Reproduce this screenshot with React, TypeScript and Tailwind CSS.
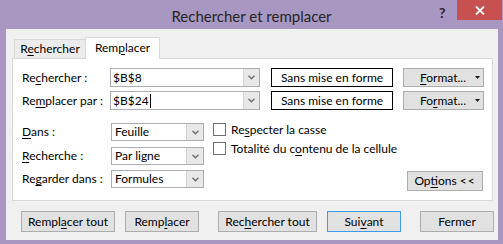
import React from "react";

const font = "font-['Segoe_UI','Lato',sans-serif]";

function Chevron() {
  return (
    <svg width="7" height="5" viewBox="0 0 7 5">
      <path d="M0.5 0.8 L3.5 3.8 L6.5 0.8" fill="none" stroke="#6b6b6b" strokeWidth="1.3" />
    </svg>
  );
}

function Caret() {
  return (
    <svg width="5" height="3" viewBox="0 0 5 3">
      <path d="M0 0 H5 L2.5 3 Z" fill="#1a1a1a" />
    </svg>
  );
}

function Combo({ value, caret = false }: { value: string; caret?: boolean }) {
  return (
    <div className="flex h-[19px] w-[150px] shrink-0 border border-[#abadb3] bg-white">
      <div className="flex flex-1 items-center pl-[2px] text-[12px] text-black">
        {value}
        {caret && <span className="ml-px h-[14px] w-px bg-black" />}
      </div>
      <div className="flex w-[16px] items-center justify-center border-l border-[#d5d5d5] bg-[#e8e8e8]">
        <Chevron />
      </div>
    </div>
  );
}

function Select({ value }: { value: string }) {
  return (
    <div className="flex h-[18px] w-[93px] shrink-0 border border-[#abadb3] bg-white">
      <div className="flex flex-1 items-center pl-[3px] text-[12px] text-black">{value}</div>
      <div className="flex w-[17px] items-center justify-center border-l border-[#d5d5d5] bg-[#e8e8e8]">
        <Chevron />
      </div>
    </div>
  );
}

function FormatButton({ children }: { children: React.ReactNode }) {
  return (
    <div className="ml-[10px] flex h-[19px] w-[81px] shrink-0 items-center border border-[#adadad] bg-[#e1e1e1] pl-[16px] text-[12px] text-black">
      <span className="whitespace-nowrap">{children}</span>
      <span className="mr-[2px] ml-auto flex w-[6px] items-center">
        <Caret />
      </span>
    </div>
  );
}

function Button({ children, w, blue = false }: { children: React.ReactNode; w: string; blue?: boolean }) {
  return (
    <div
      className={
        "flex h-[21px] items-center justify-center border bg-[#e1e1e1] text-[12px] whitespace-nowrap text-black " +
        w +
        (blue ? " border-[#3c9af0]" : " border-[#adadad]")
      }
    >
      {children}
    </div>
  );
}

function U({ children }: { children: React.ReactNode }) {
  return <span className="underline underline-offset-[2px]">{children}</span>;
}

export default function App() {
  return (
    <div className={"flex h-[244px] w-[503px] flex-col bg-[#a797c1] " + font}>
      {/* Title bar */}
      <div className="relative h-[29px]">
        <div className="pt-[5px] text-center text-[15px] text-[#262626]">Rechercher et remplacer</div>
        <div className="absolute top-[2px] left-[439px] text-[14px] font-bold text-[#2a1f2e]">?</div>
        <div className="absolute top-0 left-[457px] flex h-[20px] w-[45px] items-center justify-center bg-[#c75050]">
          <svg width="10" height="9" viewBox="0 0 10 9">
            <path d="M1 0.5 L9 8.5 M9 0.5 L1 8.5" stroke="#ffffff" strokeWidth="1.8" />
          </svg>
        </div>
      </div>

      {/* Client area */}
      <div className="ml-[6px] mr-[5px] h-[211px] bg-[#f0f0f0] pt-[8px]">
        {/* Tabs */}
        <div className="relative z-10 ml-[8px] flex h-[21px] items-end">
          <div className="flex h-[19px] w-[72px] items-center justify-center border border-b-0 border-[#d9d9d9] bg-[#ebebeb] text-[12px] text-black">
            <span>
              R<U>e</U>chercher
            </span>
          </div>
          <div className="-mb-px -ml-px flex h-[22px] w-[75px] items-center justify-center border border-b-0 border-[#d9d9d9] bg-white pb-[2px] text-[12px] text-black">
            <span>
              Rem<U>p</U>lacer
            </span>
          </div>
        </div>

        {/* Panel */}
        <div className="ml-[6px] h-[143px] w-[481px] border border-[#d9d9d9] bg-white pt-[9px] pl-[9px] text-[12px] text-black">
          <div className="flex h-[19px] items-center">
            <div className="w-[88px] shrink-0 whitespace-nowrap">
              Re<U>c</U>hercher :
            </div>
            <Combo value="$B$8" />
            <div className="ml-[11px] flex h-[19px] w-[122px] shrink-0 items-center justify-center border border-black whitespace-nowrap">
              Sans mise en forme
            </div>
            <FormatButton>
              <U>F</U>ormat...
            </FormatButton>
          </div>
          <div className="mt-[4px] flex h-[19px] items-center">
            <div className="w-[88px] shrink-0 whitespace-nowrap">
              Re<U>m</U>placer par :
            </div>
            <Combo value="$B$24" caret />
            <div className="ml-[11px] flex h-[19px] w-[122px] shrink-0 items-center justify-center border border-black whitespace-nowrap">
              Sans mise en forme
            </div>
            <FormatButton>
              Fo<U>r</U>mat...
            </FormatButton>
          </div>

          <div className="mt-[13px] flex items-start">
            <div className="flex shrink-0 flex-col">
              <div className="flex items-center">
                <div className="w-[89px] whitespace-nowrap">
                  <U>D</U>ans :
                </div>
                <Select value="Feuille" />
              </div>
              <div className="mt-[6px] flex items-center">
                <div className="w-[89px] whitespace-nowrap">
                  <U>R</U>echerche :
                </div>
                <Select value="Par ligne" />
              </div>
              <div className="mt-[5px] flex items-center">
                <div className="w-[89px] whitespace-nowrap">
                  Re<U>g</U>arder dans :
                </div>
                <Select value="Formules" />
              </div>
            </div>

            <div className="ml-[9px] flex shrink-0 flex-col">
              <div className="flex h-[13px] items-center">
                <span className="h-[13px] w-[13px] border border-[#707070] bg-white" />
                <span className="ml-[5px] whitespace-nowrap">
                  Re<U>s</U>pecter la casse
                </span>
              </div>
              <div className="mt-[6px] flex h-[13px] items-center">
                <span className="h-[13px] w-[13px] border border-[#707070] bg-white" />
                <span className="ml-[5px] whitespace-nowrap">
                  Totalité du c<U>o</U>ntenu de la cellule
                </span>
              </div>
            </div>

            <div className="mt-[48px] mr-[9px] ml-auto flex h-[20px] w-[76px] shrink-0 items-center justify-center border border-[#adadad] bg-[#e1e1e1] whitespace-nowrap">
              <span>
                Op<U>t</U>ions <span className="tracking-[1px]">&lt;&lt;</span>
              </span>
            </div>
          </div>
        </div>

        {/* Bottom buttons */}
        <div className="mt-[10px] ml-[15px] flex">
          <Button w="w-[94px]">
            Rempl<U>a</U>cer tout
          </Button>
          <div className="ml-[10px]">
            <Button w="w-[74px]">
              Remp<U>l</U>acer
            </Button>
          </div>
          <div className="ml-[19px]">
            <Button w="w-[99px]">
              Rec<U>h</U>ercher tout
            </Button>
          </div>
          <div className="ml-[10px]">
            <Button w="w-[74px]" blue>
              Sui<U>v</U>ant
            </Button>
          </div>
          <div className="ml-[19px]">
            <Button w="w-[74px]">Fermer</Button>
          </div>
        </div>
      </div>
    </div>
  );
}
